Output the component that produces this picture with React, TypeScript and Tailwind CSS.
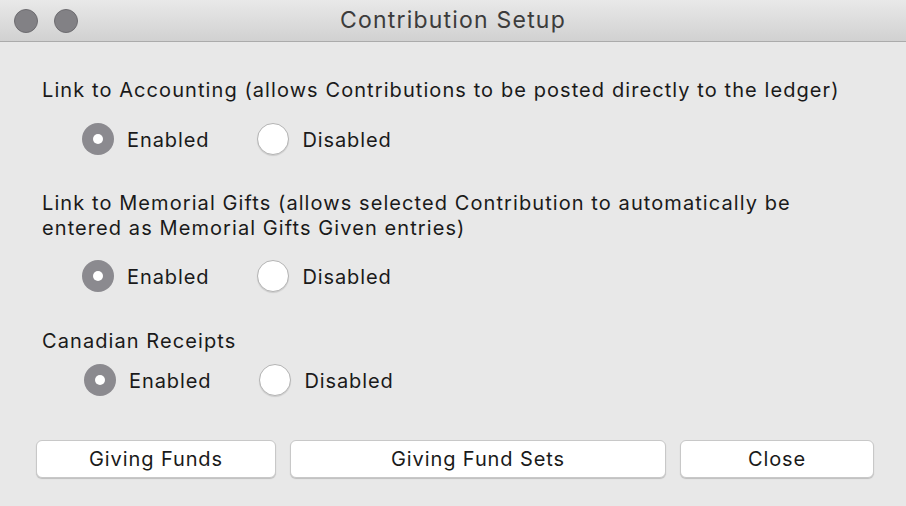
import React from "react";

function Radio({ checked, label }: { checked: boolean; label: string }) {
  return (
    <div className="flex items-center gap-[13px]">
      {checked ? (
        <div className="w-[32px] h-[32px] rounded-full bg-[#8b8a8f] flex items-center justify-center">
          <div className="w-[10px] h-[10px] rounded-full bg-white" />
        </div>
      ) : (
        <div className="w-[32px] h-[32px] rounded-full bg-white border border-[#b4b4b4] shadow-[0_1px_1px_rgba(0,0,0,0.12)]" />
      )}
      <span className="text-[20px] leading-[24px] pt-[2px] text-[#1a1a1a]">{label}</span>
    </div>
  );
}

function RadioRow({ indent }: { indent: string }) {
  return (
    <div className={`flex items-center gap-[48px] ${indent}`}>
      <Radio checked label="Enabled" />
      <Radio checked={false} label="Disabled" />
    </div>
  );
}

function Button({ label, width }: { label: string; width: string }) {
  return (
    <button
      className={`${width} h-[38px] rounded-[6px] bg-white border border-[#c8c8c8] shadow-[0_1px_1px_rgba(0,0,0,0.18)] text-[20px] text-[#1a1a1a]`}
    >
      {label}
    </button>
  );
}

export default function App() {
  return (
    <div
      className="w-[906px] h-[506px] bg-[#e8e8e8] flex flex-col overflow-hidden tracking-[0.9px]"
      style={{ fontFamily: 'Inter, "Liberation Sans", Arial, sans-serif' }}
    >
      <div className="h-[42px] shrink-0 bg-gradient-to-b from-[#e9e9e9] to-[#d1d1d1] border-b border-[#ababab] flex items-center relative">
        <div className="flex gap-[16px] pl-[14px]">
          <div className="w-[24px] h-[24px] rounded-full bg-[#828185] border border-[#6d6c70]" />
          <div className="w-[24px] h-[24px] rounded-full bg-[#828185] border border-[#6d6c70]" />
        </div>
        <div className="absolute inset-0 flex items-center justify-center text-[23px] tracking-[1.2px] text-[#3c3c3c]">
          Contribution Setup
        </div>
      </div>

      <div className="flex flex-col pl-[42px] pt-[36px]">
        <div className="text-[20px] leading-[24px] tracking-[1.08px] text-[#1a1a1a]">
          Link to Accounting (allows Contributions to be posted directly to the ledger)
        </div>
        <div className="mt-[21px]">
          <RadioRow indent="pl-[40px]" />
        </div>

        <div className="mt-[36px] text-[20px] leading-[25px] tracking-[1.08px] text-[#1a1a1a]">
          Link to Memorial Gifts (allows selected Contribution to automatically be
          <br />
          entered as Memorial Gifts Given entries)
        </div>
        <div className="mt-[19px]">
          <RadioRow indent="pl-[40px]" />
        </div>

        <div className="mt-[37px] text-[20px] leading-[24px] tracking-[1.08px] text-[#1a1a1a]">Canadian Receipts</div>
        <div className="mt-[11px]">
          <RadioRow indent="pl-[42px]" />
        </div>
      </div>

      <div className="flex gap-[14px] pl-[36px] mt-[44px]">
        <Button label="Giving Funds" width="w-[240px]" />
        <Button label="Giving Fund Sets" width="w-[376px]" />
        <Button label="Close" width="w-[194px]" />
      </div>
    </div>
  );
}
